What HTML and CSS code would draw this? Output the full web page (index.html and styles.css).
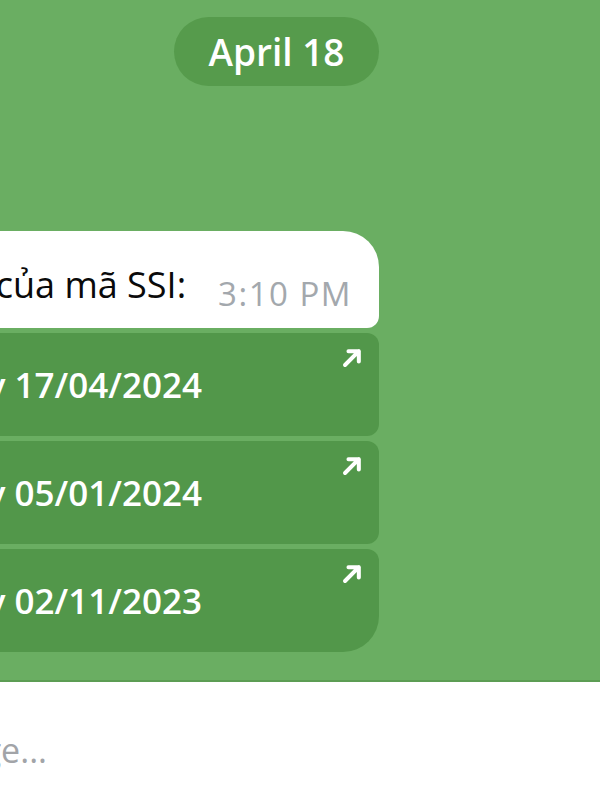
FILE: index.html
```html
<!DOCTYPE html>
<html lang="vi">
<head>
    <meta charset="UTF-8">
    <meta name="viewport" content="width=device-width, initial-scale=1.0">
    <title>Chat</title>
    <link rel="stylesheet" href="styles.css">
</head>
<body>

    <div class="chat">
        <div class="date">April 18</div>

        <div class="message">
            <div class="bubble">
                <span class="text">Danh sách báo cáo phân tích của mã SSI:</span>
                <span class="time">3:10 PM</span>
            </div>
            <div class="button">Báo cáo ngày 17/04/2024
                <svg class="arrow" viewBox="0 0 20 20"><path d="M3.5 16.5 L15.5 4.5 M6.5 4.5 H15.5 V13.5"/></svg>
            </div>
            <div class="button">Báo cáo ngày 05/01/2024
                <svg class="arrow" viewBox="0 0 20 20"><path d="M3.5 16.5 L15.5 4.5 M6.5 4.5 H15.5 V13.5"/></svg>
            </div>
            <div class="button last">Báo cáo ngày 02/11/2023
                <svg class="arrow" viewBox="0 0 20 20"><path d="M3.5 16.5 L15.5 4.5 M6.5 4.5 H15.5 V13.5"/></svg>
            </div>
        </div>
    </div>

    <div class="composer">
        <span class="placeholder">Message...</span>
    </div>

</body>
</html>
```

FILE: styles.css
```css
body {
    margin: 0;
    height: 800px;
    overflow: hidden;
    background: #fff;
    font-family: "Open Sans", sans-serif;
}
.chat {
    height: 682px;
    box-sizing: border-box;
    background: #6aae62;
    border-bottom: 2px solid #5c9d54;
    display: flex;
    flex-direction: column;
    align-items: flex-end;
    padding-right: 221px;
}
.date {
    margin-top: 17px;
    width: 205px;
    height: 69px;
    border-radius: 35px;
    background: #569b4c;
    color: #fff;
    font-size: 37px;
    font-weight: 600;
    display: flex;
    align-items: center;
    justify-content: center;
}
.message {
    margin-top: 145px;
    width: 800px;
    display: flex;
    flex-direction: column;
    gap: 5px;
}
.bubble {
    height: 97px;
    box-sizing: border-box;
    background: #fff;
    border-radius: 36px 36px 12px 12px;
    display: flex;
    justify-content: flex-end;
    align-items: flex-start;
    padding-right: 27px;
    white-space: nowrap;
}
.text {
    margin-top: 33px;
    font-size: 36px;
    line-height: 42px;
    color: #0a0a0a;
}
.time {
    margin-top: 44px;
    margin-left: 32px;
    font-size: 33px;
    line-height: 38px;
    letter-spacing: 1.5px;
    color: #a3a8ad;
}
.button {
    position: relative;
    height: 103px;
    background: #52974a;
    border-radius: 12px;
    color: #fff;
    font-size: 35px;
    font-weight: 600;
    display: flex;
    align-items: center;
    justify-content: flex-end;
    padding-right: 177px;
    white-space: nowrap;
}
.button.last {
    border-radius: 12px 12px 36px 12px;
}
.arrow {
    position: absolute;
    top: 13px;
    right: 15px;
    width: 23px;
    height: 23px;
    fill: none;
    stroke: #fff;
    stroke-width: 3.5;
    stroke-linecap: round;
    stroke-linejoin: round;
}
.composer {
    width: 47px;
    padding-top: 46px;
    display: flex;
    justify-content: flex-end;
}
.placeholder {
    font-size: 34px;
    line-height: 44px;
    color: #a2a4a8;
    white-space: nowrap;
}
```
